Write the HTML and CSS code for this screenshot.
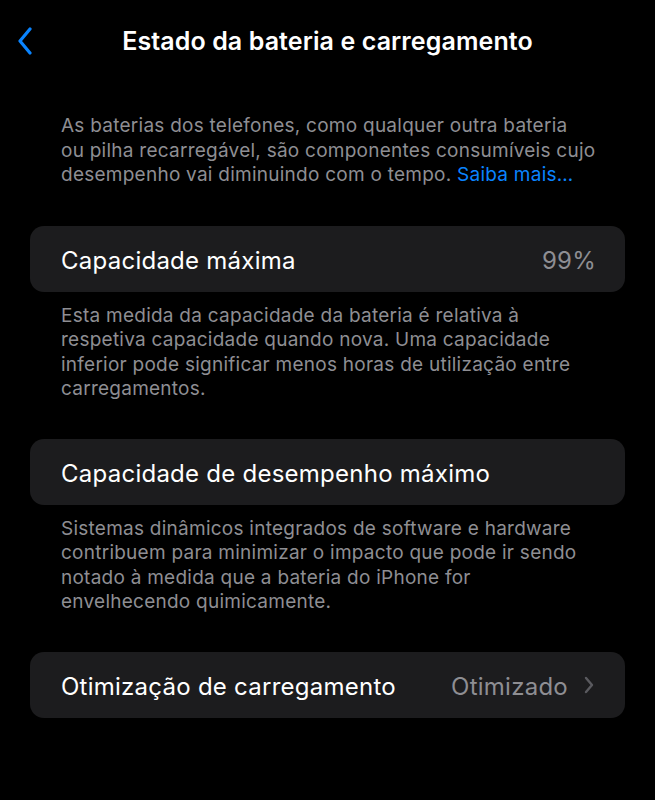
FILE: index.html
```html
<!DOCTYPE html>
<html lang="pt">
<head>
<meta charset="utf-8">
<link rel="stylesheet" href="styles.css">
</head>
<body>
<div class="screen">
  <header class="nav">
    <svg class="back" width="16" height="28" viewBox="0 0 16 28"><path d="M13 2 L3 14 L13 26" fill="none" stroke="#0a84ff" stroke-width="3.2" stroke-linecap="round" stroke-linejoin="round"/></svg>
    <h1 class="title">Estado da bateria e carregamento</h1>
  </header>
  <p class="note intro">As baterias dos telefones, como qualquer outra bateria<br>ou pilha recarregável, são componentes consumíveis cujo<br>desempenho vai diminuindo com o tempo. <span class="link">Saiba mais…</span></p>

  <div class="card"><span class="label">Capacidade máxima</span><span class="value">99%</span></div>
  <p class="note">Esta medida da capacidade da bateria é relativa à<br>respetiva capacidade quando nova. Uma capacidade<br>inferior pode significar menos horas de utilização entre<br>carregamentos.</p>

  <div class="card"><span class="label">Capacidade de desempenho máximo</span></div>
  <p class="note">Sistemas dinâmicos integrados de software e hardware<br>contribuem para minimizar o impacto que pode ir sendo<br>notado à medida que a bateria do iPhone for<br>envelhecendo quimicamente.</p>

  <div class="card"><span class="label">Otimização de carregamento</span><span class="value">Otimizado<svg class="chev" width="10" height="18" viewBox="0 0 10 18"><path d="M2 2 L8 9 L2 16" fill="none" stroke="#5a5a5f" stroke-width="2.4" stroke-linecap="round" stroke-linejoin="round"/></svg></span></div>
</div>
</body>
</html>
```
FILE: styles.css
```css
html, body {
  margin: 0;
  padding: 0;
  background: #000;
}
.screen {
  width: 655px;
  height: 800px;
  background: #000;
  font-family: Inter, "Noto Sans", sans-serif;
  color: #fff;
  padding: 0 30px;
  box-sizing: border-box;
  overflow: hidden;
}
.nav {
  display: flex;
  align-items: center;
  justify-content: center;
  height: 82px;
  position: relative;
}
.back {
  position: absolute;
  left: -13px;
  top: 27px;
}
.title {
  margin: 0;
  font-size: 25px;
  font-weight: 600;
  letter-spacing: 0.1px;
}
.note {
  margin: 0;
  padding: 0 31px;
  font-size: 19px;
  line-height: 24.5px;
  letter-spacing: 0.25px;
  color: #8e8e93;
  white-space: nowrap;
}
.intro {
  margin-top: 32px;
  margin-bottom: 38px;
}
.link {
  color: #0a84ff;
}
.card {
  height: 66px;
  border-radius: 14px;
  background: #1c1c1e;
  display: flex;
  align-items: center;
  justify-content: space-between;
  padding: 3px 29px 0 31px;
  box-sizing: border-box;
  font-size: 24px;
  letter-spacing: 0.25px;
  margin-bottom: 12px;
}
.value {
  color: #8e8e93;
  display: flex;
  align-items: center;
  gap: 16px;
}
.chev {
  margin-right: 2px;
  margin-top: -2px;
}
.card + .note {
  margin-bottom: 37px;
}
```
